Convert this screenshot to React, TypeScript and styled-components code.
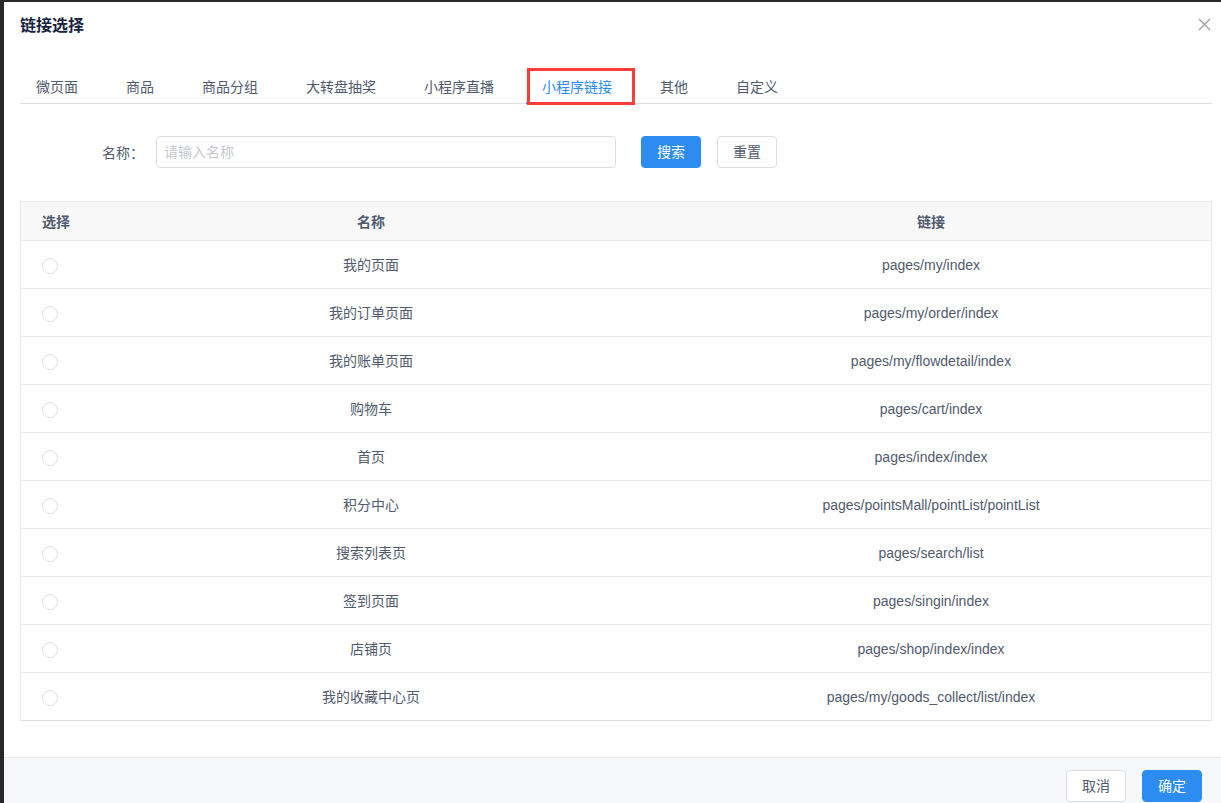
import React, { useState } from "react";
import styled, { createGlobalStyle, css } from "styled-components";

const GlobalStyle = createGlobalStyle`
  *, *::before, *::after { box-sizing: border-box; }
  body {
    margin: 0;
    background: #2a272a;
    color: #515a6e;
    font-family: "Liberation Sans", "Noto Sans CJK SC", sans-serif;
    font-size: 14px;
    line-height: 20px;
  }
  button, input { font: inherit; }
`;

const Backdrop = styled.div`
  display: flex;
  min-height: 100vh;
  padding: 2px 0 0 4px;
  background: #2a272a;
`;

const Dialog = styled.section`
  display: flex;
  flex: 1;
  flex-direction: column;
  min-width: 0;
  background: #fff;
`;

const Header = styled.header`
  display: flex;
  align-items: center;
  justify-content: space-between;
  height: 46px;
  padding: 0 8px 0 16px;
`;

const Title = styled.h1`
  margin: 0;
  padding-top: 2px;
  color: #17233d;
  font-size: 16px;
  font-weight: 700;
  line-height: 24px;
`;

const CloseButton = styled.button`
  display: flex;
  padding: 2px 2px 4px;
  border: 0;
  background: none;
  color: #999;
  cursor: pointer;
`;

const Body = styled.div`
  padding: 20px 9px 36px 16px;
`;

const TabBar = styled.nav`
  display: flex;
  gap: 16px;
  height: 36px;
  border-bottom: 1px solid #dcdee2;
`;

const TabButton = styled.button<{ $active: boolean }>`
  position: relative;
  height: 36px;
  padding: 4px 16px 0;
  border: 0;
  border-bottom: 2px solid ${(p) => (p.$active ? "#2d8cf0" : "transparent")};
  background: none;
  color: ${(p) => (p.$active ? "#2d8cf0" : "#515a6e")};
  white-space: nowrap;
  cursor: pointer;
`;

const Highlight = styled.span`
  position: absolute;
  top: 0;
  left: 1px;
  width: 108px;
  height: 37px;
  border: 3px solid #fb3a3a;
  pointer-events: none;
`;

const SearchForm = styled.form`
  display: flex;
  align-items: center;
  margin: 32px 0 33px;
`;

const FieldLabel = styled.label`
  width: 136px;
  padding: 2px 12px 0 0;
  text-align: right;
  white-space: nowrap;
`;

const TextField = styled.input`
  flex: 0 1 460px;
  min-width: 0;
  height: 32px;
  margin-right: 25px;
  padding: 4px 7px;
  border: 1px solid #dcdee2;
  border-radius: 4px;
  color: #515a6e;
  outline: none;

  &::placeholder { color: #c5c8ce; opacity: 1; }
  &:focus { border-color: #57a3f3; }
`;

const ButtonGroup = styled.div`
  display: flex;
  gap: 16px;
`;

const Button = styled.button<{ $primary?: boolean }>`
  height: 32px;
  padding: 0 15px;
  border: 1px solid #dcdee2;
  border-radius: 4px;
  background: #fff;
  color: #515a6e;
  white-space: nowrap;
  cursor: pointer;
  ${(p) =>
    p.$primary &&
    css`
      border-color: #2d8cf0;
      background: #2d8cf0;
      color: #fff;
    `}
`;

const TableFrame = styled.div`
  border: 1px solid #e8eaec;
  border-bottom-color: #dcdee2;
`;

const Table = styled.table`
  width: 100%;
  border-collapse: separate;
  border-spacing: 0;
  table-layout: fixed;
`;

const HeadCell = styled.th<{ $narrow?: boolean }>`
  width: ${(p) => (p.$narrow ? "70px" : "auto")};
  height: 39px;
  padding: 1px 0 0;
  border-bottom: 1px solid #e8eaec;
  background: #f8f8f9;
  font-weight: 700;
  text-align: center;
`;

const Row = styled.tr`
  &:last-child td { height: 47px; border-bottom: 0; }
`;

const Cell = styled.td`
  height: 48px;
  padding: 0;
  border-bottom: 1px solid #e8eaec;
  text-align: center;
`;

const Radio = styled.input`
  display: block;
  width: 16px;
  height: 16px;
  margin: 2px 0 0 21px;
  border: 1px solid #dcdee2;
  border-radius: 50%;
  background: #fff;
  appearance: none;
  cursor: pointer;

  &:checked {
    border-color: #2d8cf0;
    background: radial-gradient(#2d8cf0 0 4px, #fff 5px);
  }
`;

const Footer = styled.footer`
  display: flex;
  flex: 1;
  align-items: flex-start;
  justify-content: flex-end;
  gap: 16px;
  padding: 12px 19px 0;
  border-top: 1px solid #e8eaec;
  background: #f7f8fa;
`;

const TABS = ["微页面", "商品", "商品分组", "大转盘抽奖", "小程序直播", "小程序链接", "其他", "自定义"];

const LINKS = [
  { name: "我的页面", path: "pages/my/index" },
  { name: "我的订单页面", path: "pages/my/order/index" },
  { name: "我的账单页面", path: "pages/my/flowdetail/index" },
  { name: "购物车", path: "pages/cart/index" },
  { name: "首页", path: "pages/index/index" },
  { name: "积分中心", path: "pages/pointsMall/pointList/pointList" },
  { name: "搜索列表页", path: "pages/search/list" },
  { name: "签到页面", path: "pages/singin/index" },
  { name: "店铺页", path: "pages/shop/index/index" },
  { name: "我的收藏中心页", path: "pages/my/goods_collect/list/index" },
];

export default function App() {
  const [tab, setTab] = useState("小程序链接");
  const [selected, setSelected] = useState("");
  const [query, setQuery] = useState("");

  return (
    <>
      <GlobalStyle />
      <Backdrop>
        <Dialog role="dialog" aria-labelledby="dialog-title">
          <Header>
            <Title id="dialog-title">链接选择</Title>
            <CloseButton type="button" aria-label="关闭">
              <svg width="13" height="13" viewBox="0 0 13 13" fill="none" stroke="currentColor" strokeWidth="1.1">
                <path d="M1 1L12 12M12 1L1 12" />
              </svg>
            </CloseButton>
          </Header>
          <Body>
            <TabBar>
              {TABS.map((name) => (
                <TabButton key={name} type="button" $active={name === tab} onClick={() => setTab(name)}>
                  {name}
                  {name === tab && <Highlight />}
                </TabButton>
              ))}
            </TabBar>
            <SearchForm onSubmit={(e) => e.preventDefault()}>
              <FieldLabel htmlFor="link-name">名称：</FieldLabel>
              <TextField
                id="link-name"
                placeholder="请输入名称"
                value={query}
                onChange={(e) => setQuery(e.target.value)}
              />
              <ButtonGroup>
                <Button type="submit" $primary>搜索</Button>
                <Button type="button" onClick={() => setQuery("")}>重置</Button>
              </ButtonGroup>
            </SearchForm>
            <TableFrame>
              <Table>
                <thead>
                  <tr>
                    <HeadCell scope="col" $narrow>选择</HeadCell>
                    <HeadCell scope="col">名称</HeadCell>
                    <HeadCell scope="col">链接</HeadCell>
                  </tr>
                </thead>
                <tbody>
                  {LINKS.map(({ name, path }) => (
                    <Row key={path}>
                      <Cell>
                        <Radio
                          type="radio"
                          name="link"
                          aria-label={name}
                          checked={selected === path}
                          onChange={() => setSelected(path)}
                        />
                      </Cell>
                      <Cell>{name}</Cell>
                      <Cell>{path}</Cell>
                    </Row>
                  ))}
                </tbody>
              </Table>
            </TableFrame>
          </Body>
          <Footer>
            <Button type="button">取消</Button>
            <Button type="button" $primary>确定</Button>
          </Footer>
        </Dialog>
      </Backdrop>
    </>
  );
}
